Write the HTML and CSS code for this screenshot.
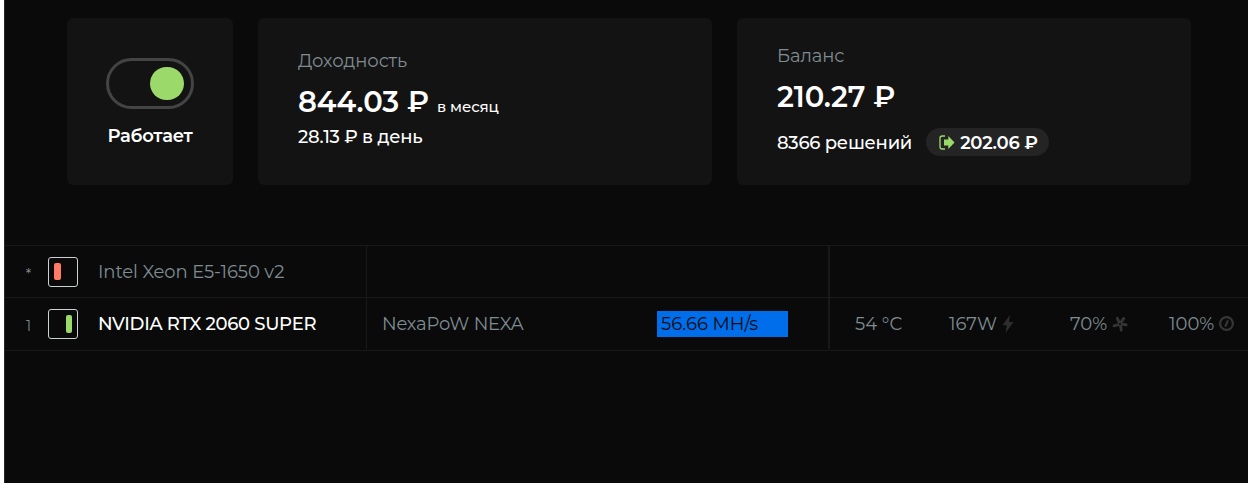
FILE: index.html
```html
<!DOCTYPE html>
<html lang="ru">
<head>
  <meta charset="UTF-8">
  <meta name="viewport" content="width=device-width, initial-scale=1.0">
  <title>Майнер</title>
  <link rel="stylesheet" href="styles.css">
</head>
<body>
  <main class="app">
    <section class="cards">
      <div class="card card-switch">
        <div class="switch"><span class="switch-knob"></span></div>
        <div class="switch-label">Работает</div>
      </div>

      <div class="card card-income">
        <div class="card-title">Доходность</div>
        <div class="amount">844.03 ₽ <small>в месяц</small></div>
        <div class="line">28.13 ₽ в день</div>
      </div>

      <div class="card card-balance">
        <div class="card-title">Баланс</div>
        <div class="amount">210.27 ₽</div>
        <div class="line">
          <span class="shares">8366 решений</span>
          <span class="payout">
            <svg viewBox="0 0 16 15" width="16" height="15">
              <path d="M6 1H3.2Q1 1 1 3.2V11.8Q1 14 3.2 14H6" fill="none" stroke="#9bda6a" stroke-width="1.3"/>
              <path d="M5 4.5H9.3V1L15.5 7.5L9.3 14V10.5H5Z" fill="#9bda6a"/>
            </svg>
            <b>202.06 ₽</b>
          </span>
        </div>
      </div>
    </section>

    <section class="devices">
      <div class="row">
        <div class="cell cell-device">
          <span class="num">*</span>
          <span class="toggle"><i class="toggle-bar"></i></span>
          <span class="name">Intel Xeon E5-1650 v2</span>
        </div>
        <div class="cell cell-algo"></div>
        <div class="cell cell-stats"></div>
      </div>

      <div class="row row-active">
        <div class="cell cell-device">
          <span class="num">1</span>
          <span class="toggle on"><i class="toggle-bar"></i></span>
          <span class="name">NVIDIA RTX 2060 SUPER</span>
        </div>
        <div class="cell cell-algo">
          <span class="algo">NexaPoW NEXA</span>
          <span class="rate">56.66 MH/s</span>
        </div>
        <div class="cell cell-stats">
          <span class="stat">54 °C</span>
          <span class="stat">167W
            <svg viewBox="0 0 12 18" width="12" height="18">
              <path d="M7.8 0L0.5 10.2H4.8L3.5 18L11.5 7H7Z" fill="#2e2e2e"/>
            </svg>
          </span>
          <span class="stat">70%
            <svg viewBox="0 0 16 16" width="16" height="16">
              <path d="M7.5 7L5.3 2.3M8.5 7L11.8 2.4M9 8L14.2 8.8M8.5 8.500L9.200 14M7.500 8.300L2 9.800" fill="none" stroke="#353535" stroke-width="2.800" stroke-linecap="round"/>
              <circle cx="8" cy="8" r="1" fill="#0a0a0a"/>
            </svg>
          </span>
          <span class="stat">100%
            <svg viewBox="0 0 16 16" width="16" height="16">
              <circle cx="7.5" cy="7.5" r="6.4" fill="none" stroke="#353535" stroke-width="2.300"/>
              <path d="M8.600 5.200L6.600 9.800" stroke="#353535" stroke-width="2.300" stroke-linecap="round"/>
            </svg>
          </span>
        </div>
      </div>
    </section>
  </main>
</body>
</html>
```
FILE: styles.css
```css
* {
  box-sizing: border-box;
}

body {
  margin: 0;
  background: #fff;
  font-family: 'Montserrat', 'Inter', sans-serif;
  font-size: 18px;
  line-height: 24px;
  color: #fff;
}

.app {
  height: 483px;
  margin-left: 4px;
  border-left: 1px solid #292929;
  background: #0a0a0a;
  overflow: hidden;
}

/* cards */

.cards {
  display: grid;
  grid-template-columns: 166px 454px 454px;
  gap: 25px;
  padding: 18px 0 60px 62px;
}

.card {
  height: 167px;
  padding: 0 40px;
  border-radius: 6px;
  background: #131313;
  font-weight: 500;
  letter-spacing: -0.25px;
  white-space: nowrap;
}

.card-switch {
  display: flex;
  flex-direction: column;
  align-items: center;
  padding: 40px 0 0;
}

.switch {
  display: flex;
  align-items: center;
  justify-content: flex-end;
  width: 88px;
  height: 51px;
  padding-right: 7px;
  border: 3px solid #444;
  border-radius: 26px;
}

.switch-knob {
  width: 34px;
  height: 33px;
  border-radius: 17px;
  background: #9bda6a;
}

.switch-label {
  margin-top: 15px;
  font-weight: 600;
}

.card-income {
  padding-top: 31px;
}

.card-balance {
  padding-top: 26px;
}

.card-title {
  color: #7f8c92;
  font-weight: 400;
  letter-spacing: -0.05px;
}

.amount {
  display: flex;
  align-items: baseline;
  gap: 8px;
  height: 40px;
  margin-top: 9px;
  font-size: 29px;
  line-height: 40px;
  font-weight: 600;
  letter-spacing: -0.1px;
}

.amount small {
  font-size: 15px;
  font-weight: 500;
  letter-spacing: -0.1px;
}

.line {
  display: flex;
  align-items: center;
  gap: 14px;
}

.card-income .line {
  margin-top: 3px;
}

.card-balance .line {
  margin-top: 11px;
}

.shares {
  padding-top: 1px;
}

.payout {
  display: flex;
  align-items: center;
  gap: 5px;
  width: 123px;
  height: 28px;
  padding-left: 13px;
  border-radius: 14px;
  background: #242424;
}

.payout b {
  padding-top: 1px;
  font-weight: 600;
}

/* devices */

.devices {
  border-top: 1px solid #191919;
  color: #7f8c92;
  white-space: nowrap;
}

.row {
  display: grid;
  grid-template-columns: 362px 463px 1fr;
  height: 52px;
  border-bottom: 1px solid #191919;
}

.row-active {
  height: 53px;
}

.cell {
  display: flex;
  align-items: center;
  border-right: 1px solid #191919;
}

.row-active .cell {
  height: 51px;
}

.cell-device {
  padding-left: 19px;
}

.cell-algo {
  justify-content: space-between;
  padding: 0 40px 0 15px;
  border-right-width: 2px;
}

.cell-stats {
  border-right: 0;
}

.row-active .cell-stats {
  display: grid;
  grid-template-columns: 94px 121px 99px 80px;
  padding-left: 25px;
}

.num {
  width: 9px;
  margin-right: 15px;
  padding-top: 4px;
  font-size: 14px;
  text-align: center;
}

.toggle {
  display: flex;
  width: 30px;
  height: 30px;
  margin-right: 20px;
  padding: 5px;
  border: 1px solid #ccd2d4;
  border-radius: 3px;
}

.toggle-bar {
  width: 7px;
  height: 17px;
  border-radius: 2px;
  background: #ff7b66;
}

.toggle.on {
  justify-content: flex-end;
}

.toggle.on .toggle-bar {
  width: 6px;
  height: 18px;
  background: #9bda6a;
}

.name {
  letter-spacing: -0.1px;
}

.row-active .name {
  color: #fff;
  font-weight: 500;
  letter-spacing: -0.3px;
}

.algo {
  letter-spacing: -0.2px;
}

.rate {
  width: 131px;
  height: 26px;
  padding-left: 4px;
  line-height: 26px;
  background: #006eeb;
  color: #0a0a0a;
}

.stat {
  display: flex;
  align-items: center;
  gap: 5px;
}
```
